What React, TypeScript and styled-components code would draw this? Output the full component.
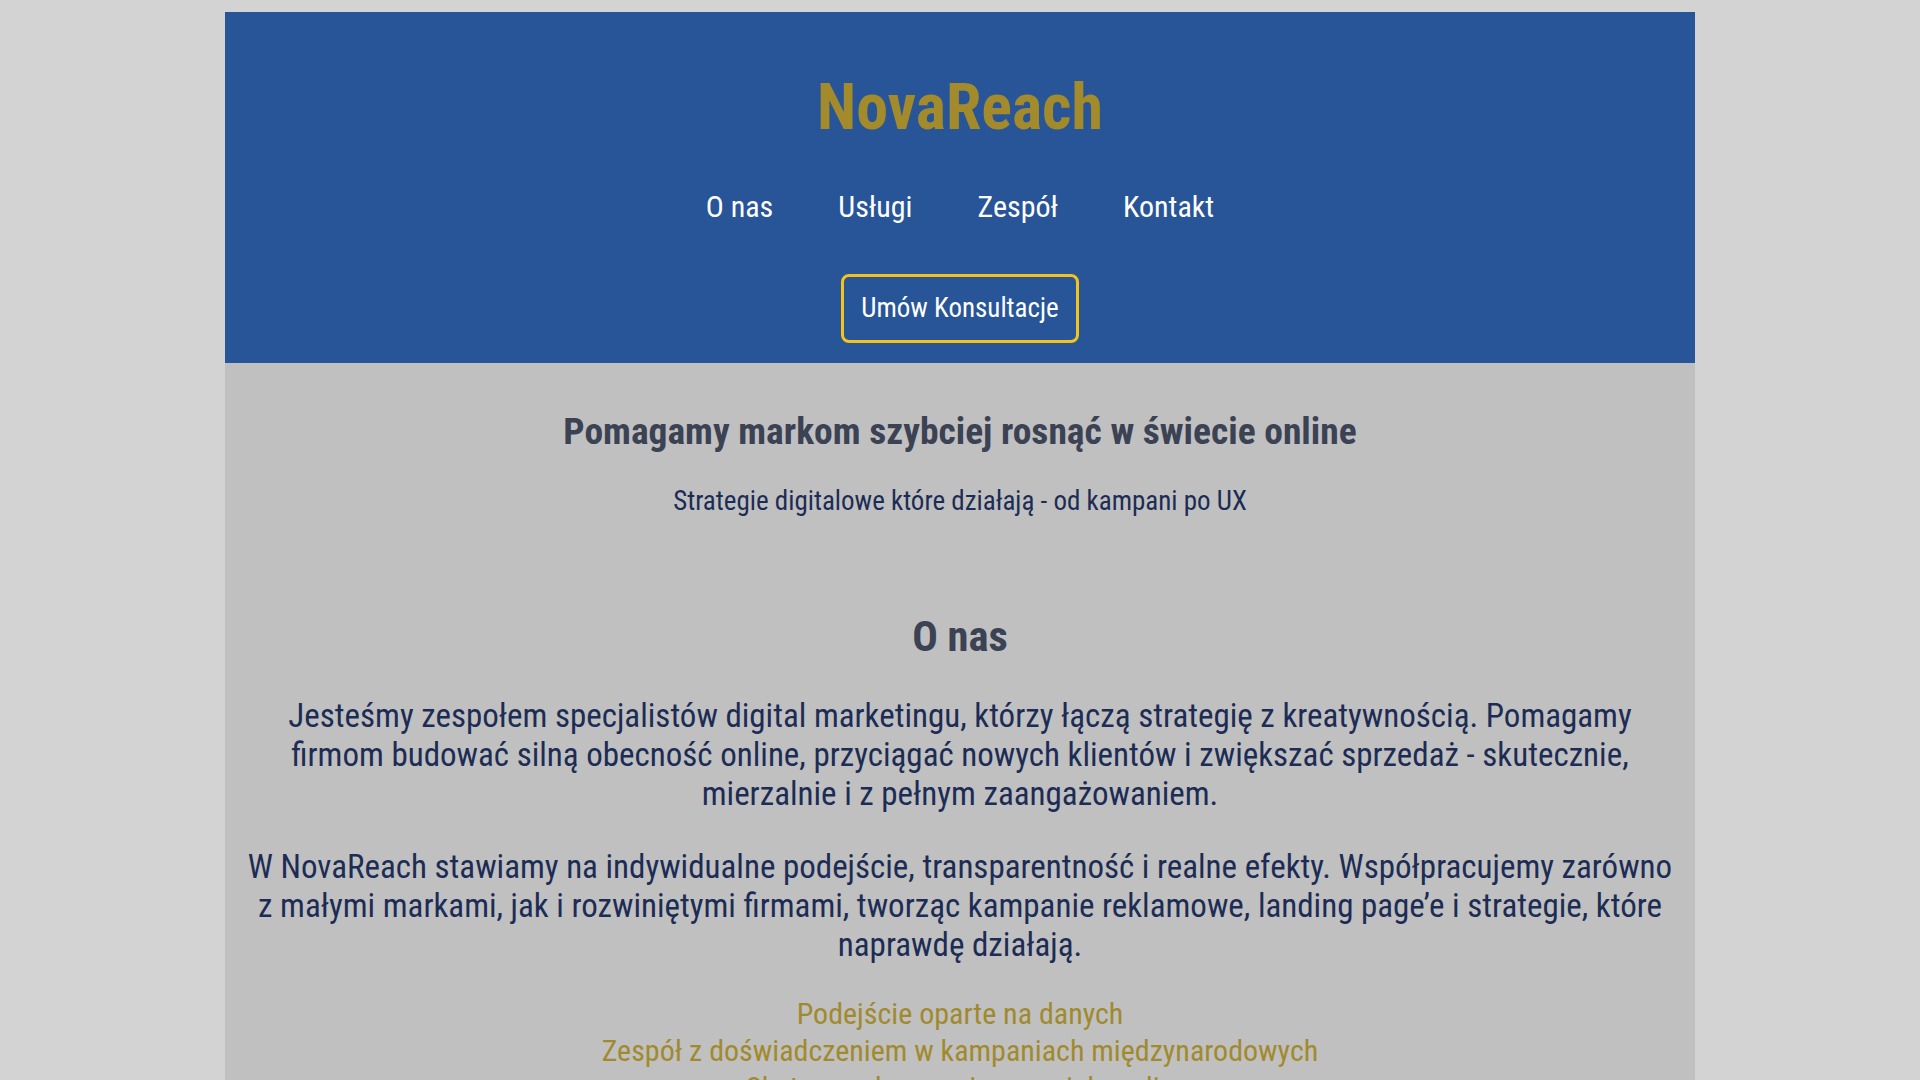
import styled, { createGlobalStyle } from 'styled-components';

const GlobalStyle = createGlobalStyle`
  html, body {
    margin: 0;
    padding: 0;
  }
  body {
    background: #d3d3d3;
    font-family: Roboto, "Liberation Sans", sans-serif;
    font-stretch: 75%;
  }
`;

const Page = styled.div`
  width: 77.2%;
  max-width: 1470px;
  margin: 12px auto 0;
  background: #c0c0c0;
`;

const Header = styled.header`
  background: #275598;
  display: flex;
  flex-direction: column;
  align-items: center;
  padding: 58px 0 20px;
`;

const Logo = styled.h1`
  margin: 0;
  color: #a38a2b;
  font-size: 64px;
  font-weight: 700;
  line-height: 1.2;
`;

const Nav = styled.nav`
  display: flex;
  gap: 65px;
  margin-top: 42px;
  a {
    color: #fff;
    text-decoration: none;
    font-size: 30px;
  }
`;

const CtaButton = styled.button`
  margin-top: 50px;
  background: transparent;
  border: 3px solid #f3c21b;
  border-radius: 8px;
  color: #fff;
  font-family: inherit;
  font-stretch: 75%;
  font-size: 27px;
  line-height: 1.172;
  padding: 16px 17px;
  cursor: pointer;
`;

const Main = styled.main`
  padding: 47px 20px 120px;
  text-align: center;
`;

const Headline = styled.h2`
  margin: 0;
  color: #3b4254;
  font-size: 37.5px;
  font-weight: 700;
  line-height: 1.172;
`;

const Lead = styled.p`
  margin: 32px 0 0;
  color: #1c2c55;
  font-size: 27px;
  line-height: 1.172;
`;

const Section = styled.section<{ $gap?: number }>`
  margin-top: ${(p) => p.$gap ?? 94}px;
`;

const SectionTitle = styled.h2`
  margin: 0;
  color: #3b4254;
  font-size: 42.5px;
  font-weight: 700;
  line-height: 1.172;
`;

const Text = styled.p`
  margin: 33px 0 0;
  color: #1c2c55;
  font-size: 33px;
  line-height: 1.19;
  &:first-of-type {
    margin-top: 34px;
  }
`;

const Perks = styled.ul`
  list-style: none;
  margin: 31px 0 0;
  padding: 0;
  li {
    color: #a08a2e;
    font-size: 30px;
    line-height: 37px;
  }
`;

const Cards = styled.div`
  display: grid;
  grid-template-columns: repeat(3, 1fr);
  gap: 32px;
  margin-top: 40px;
`;

const Card = styled.article`
  background: #275598;
  border-radius: 10px;
  padding: 40px 28px;
  min-height: 320px;
  color: #fff;
  h3 {
    margin: 0 0 20px;
    color: #f3c21b;
    font-size: 32px;
  }
  p {
    margin: 0;
    font-size: 26px;
    line-height: 1.35;
  }
`;

const ContactLine = styled.p`
  margin: 24px 0 0;
  color: #1c2c55;
  font-size: 30px;
`;

const Footer = styled.footer`
  background: #275598;
  color: #fff;
  text-align: center;
  padding: 40px 20px;
  font-size: 22px;
`;

const services = [
  ['Kampanie Ads', 'Google Ads i Meta Ads prowadzone z naciskiem na zwrot z inwestycji.'],
  ['SEO', 'Audyty, optymalizacja treści i link building, które podnoszą widoczność.'],
  ['Social Media', 'Strategie komunikacji i treści, które budują zaangażowanie.'],
  ['Landing Page', 'Strony docelowe projektowane pod konwersję i szybkie ładowanie.'],
  ['UX / UI', 'Badania użytkowników, prototypy i projekty interfejsów.'],
  ['Analityka', 'Raporty, dashboardy i wnioski oparte na danych.'],
];

const team = [
  ['Anna Kowalska', 'Head of Strategy – planuje kampanie i mierzy ich efekty.'],
  ['Marek Nowak', 'Performance Lead – odpowiada za kampanie płatne.'],
  ['Ola Wiśniewska', 'UX Designer – projektuje doświadczenia użytkowników.'],
];

export default function App() {
  return (
    <>
      <GlobalStyle />
      <Page>
        <Header>
          <Logo>NovaReach</Logo>
          <Nav>
            <a href="#o-nas">O nas</a>
            <a href="#uslugi">Usługi</a>
            <a href="#zespol">Zespół</a>
            <a href="#kontakt">Kontakt</a>
          </Nav>
          <CtaButton>Umów Konsultacje</CtaButton>
        </Header>
        <Main>
          <Headline>Pomagamy markom szybciej rosnąć w świecie online</Headline>
          <Lead>Strategie digitalowe które działają - od kampani po UX</Lead>
          <Section id="o-nas">
            <SectionTitle>O nas</SectionTitle>
            <Text>
              Jesteśmy zespołem specjalistów digital marketingu, którzy łączą strategię z kreatywnością.
              Pomagamy firmom budować silną obecność online, przyciągać nowych klientów i zwiększać
              sprzedaż - skutecznie, mierzalnie i z pełnym zaangażowaniem.
            </Text>
            <Text>
              W NovaReach stawiamy na indywidualne podejście, transparentność i realne efekty.
              Współpracujemy zarówno z małymi markami, jak i rozwiniętymi firmami, tworząc kampanie
              reklamowe, landing page’e i strategie, które naprawdę działają.
            </Text>
            <Perks>
              <li>Podejście oparte na danych</li>
              <li>Zespół z doświadczeniem w kampaniach międzynarodowych</li>
              <li>Skuteczne kampanie w social media</li>
              <li>Przejrzyste raporty i stały kontakt</li>
            </Perks>
          </Section>
          <Section id="uslugi" $gap={140}>
            <SectionTitle>Usługi</SectionTitle>
            <Cards>
              {services.map(([title, desc]) => (
                <Card key={title}>
                  <h3>{title}</h3>
                  <p>{desc}</p>
                </Card>
              ))}
            </Cards>
          </Section>
          <Section id="zespol" $gap={140}>
            <SectionTitle>Zespół</SectionTitle>
            <Cards>
              {team.map(([name, role]) => (
                <Card key={name}>
                  <h3>{name}</h3>
                  <p>{role}</p>
                </Card>
              ))}
            </Cards>
          </Section>
          <Section id="kontakt" $gap={140}>
            <SectionTitle>Kontakt</SectionTitle>
            <ContactLine>kontakt@novareach.pl</ContactLine>
            <ContactLine>+48 600 123 456</ContactLine>
            <ContactLine>ul. Marszałkowska 10, 00-001 Warszawa</ContactLine>
            <CtaButton>Umów Konsultacje</CtaButton>
          </Section>
        </Main>
        <Footer>© 2025 NovaReach. Wszelkie prawa zastrzeżone.</Footer>
      </Page>
    </>
  );
}
